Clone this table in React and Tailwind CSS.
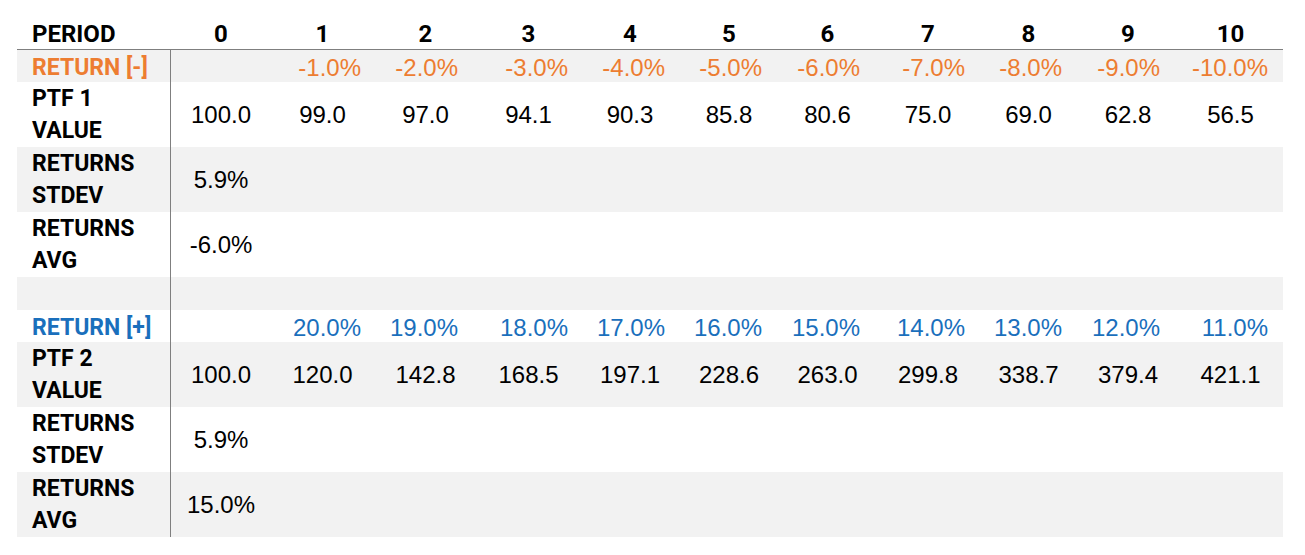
const GRID =
  "grid grid-cols-[154px_100px_103px_103px_103px_100px_98px_99px_102px_99px_100px_105px]";

const PCT_PAD = [
  "",
  "pr-[13px]",
  "pr-[19px]",
  "pr-[12px]",
  "pr-[15px]",
  "pr-[16px]",
  "pr-[17px]",
  "pr-[14px]",
  "pr-[16px]",
  "pr-[18px]",
  "pr-[15px]",
];

const neg = ["", "-1.0%", "-2.0%", "-3.0%", "-4.0%", "-5.0%", "-6.0%", "-7.0%", "-8.0%", "-9.0%", "-10.0%"];
const pos = ["", "20.0%", "19.0%", "18.0%", "17.0%", "16.0%", "15.0%", "14.0%", "13.0%", "12.0%", "11.0%"];
const ptf1 = ["100.0", "99.0", "97.0", "94.1", "90.3", "85.8", "80.6", "75.0", "69.0", "62.8", "56.5"];
const ptf2 = ["100.0", "120.0", "142.8", "168.5", "197.1", "228.6", "263.0", "299.8", "338.7", "379.4", "421.1"];

const label = "font-['Roboto',sans-serif] font-bold text-[23px]";
const data = "font-['Liberation_Sans',Arial,sans-serif] text-[24px]";

function Label({ lines, color = "text-black" }) {
  return (
    <div
      className={`${label} ${color} pl-[15px] border-r border-[#7f7f7f] flex flex-col justify-center leading-[32px]`}
    >
      {lines.map((l) => (
        <span key={l}>{l}</span>
      ))}
    </div>
  );
}

function PctRow({ title, values, color, bg }) {
  return (
    <div className={`${GRID} h-[32px] ${bg}`}>
      <Label lines={[title]} color={color} />
      {values.map((v, i) => (
        <div
          key={i}
          className={`${data} ${color} flex items-center justify-end ${PCT_PAD[i]}`}
        >
          {v}
        </div>
      ))}
    </div>
  );
}

function NumRow({ lines, values, bg }) {
  return (
    <div className={`${GRID} h-[65px] ${bg}`}>
      <Label lines={lines} />
      {values.map((v, i) => (
        <div key={i} className={`${data} text-black flex items-center justify-center`}>
          {v}
        </div>
      ))}
    </div>
  );
}

function StatRow({ lines, value, bg }) {
  return (
    <div className={`${GRID} h-[65px] ${bg}`}>
      <Label lines={lines} />
      <div className={`${data} text-black flex items-center justify-center`}>{value}</div>
    </div>
  );
}

export default function App() {
  return (
    <div className="w-[1305px] h-[555px] bg-white pt-[16px] pl-[17px]">
      <div className="w-[1266px] flex flex-col">
        <div className={`${GRID} h-[34px] border-b border-[#7f7f7f] font-['Roboto',sans-serif] font-bold text-[24px] text-black`}>
          <div className="pl-[15px] flex items-center">PERIOD</div>
          {[0, 1, 2, 3, 4, 5, 6, 7, 8, 9, 10].map((n) => (
            <div key={n} className="flex items-center justify-center">
              {n}
            </div>
          ))}
        </div>

        <PctRow title="RETURN [-]" values={neg} color="text-[#ed7d31]" bg="bg-[#f2f2f2]" />
        <NumRow lines={["PTF 1", "VALUE"]} values={ptf1} bg="bg-white" />
        <StatRow lines={["RETURNS", "STDEV"]} value="5.9%" bg="bg-[#f2f2f2]" />
        <StatRow lines={["RETURNS", "AVG"]} value="-6.0%" bg="bg-white" />
        <div className={`${GRID} h-[33px] bg-[#f2f2f2]`}>
          <div className="border-r border-[#7f7f7f]" />
        </div>

        <PctRow title="RETURN [+]" values={pos} color="text-[#1a6fbc]" bg="bg-white" />
        <NumRow lines={["PTF 2", "VALUE"]} values={ptf2} bg="bg-[#f2f2f2]" />
        <StatRow lines={["RETURNS", "STDEV"]} value="5.9%" bg="bg-white" />
        <StatRow lines={["RETURNS", "AVG"]} value="15.0%" bg="bg-[#f2f2f2]" />
      </div>
    </div>
  );
}
